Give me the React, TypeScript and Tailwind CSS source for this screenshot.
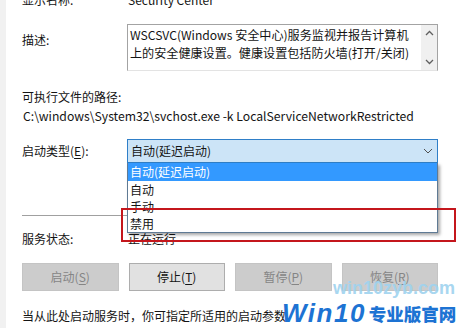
import React from "react";

const FONT = { fontFamily: '"Noto Sans CJK SC", "Liberation Sans", sans-serif' };

function U({ children }: { children: React.ReactNode }) {
  return <span className="underline underline-offset-2">{children}</span>;
}

export default function App() {
  return (
    <div
      className="relative w-[460px] h-[328px] overflow-hidden bg-white border-l-[6px] border-[#f1f1f1] text-[12px] text-[#141414]"
      style={FONT}
    >
      <div className="flex flex-col pl-[16px] w-[438px]">
        {/* display name */}
        <div className="flex h-[18px] -mt-[9px] leading-[18px]">
          <div className="w-[105px]">显示名称:</div>
          <div className="pl-[1px]">Security Center</div>
        </div>

        {/* description */}
        <div className="flex mt-[15px]">
          <div className="w-[105px] pt-[7px] leading-[18px]">描述:</div>
          <div className="flex w-[311px] h-[47px] border border-[#a3a3a3] border-b-[#e3e3e3]">
            <div className="flex-1 pl-[2px] pt-[1px] leading-[18px] text-[12.1px]">
              WSCSVC(Windows 安全中心)服务监视并报告计算机
              <br />
              上的安全健康设置。健康设置包括防火墙(打开/关闭)
            </div>
            <div className="flex w-[16px] flex-col items-center justify-between bg-[#f0f0f0] py-[5px] text-[#606060]">
              <svg width="9" height="6" viewBox="0 0 9 6">
                <path d="M1 5 L4.5 1.5 L8 5" fill="none" stroke="#606060" strokeWidth="1.3" />
              </svg>
              <svg width="9" height="6" viewBox="0 0 9 6">
                <path d="M1 1 L4.5 4.5 L8 1" fill="none" stroke="#606060" strokeWidth="1.3" />
              </svg>
            </div>
          </div>
        </div>

        {/* exe path */}
        <div className="mt-[17px] h-[18px] leading-[18px]">可执行文件的路径:</div>
        <div className="mt-[1px] h-[18px] leading-[18px] pl-[1px] text-[12.2px]">
          C:\windows\System32\svchost.exe -k LocalServiceNetworkRestricted
        </div>

        {/* startup type */}
        <div className="flex mt-[14px] h-[24px] items-center">
          <div className="w-[105px] leading-[18px]">
            启动类型(<U>E</U>):
          </div>
          <div className="flex w-[311px] h-[24px] items-center justify-between border border-[#2f7fc8] bg-[#cce4f7] pl-[3px] pr-[4px]">
            <span>自动(延迟启动)</span>
            <svg width="10" height="6" viewBox="0 0 10 6">
              <path d="M1 1 L5 5 L9 1" fill="none" stroke="#505050" strokeWidth="1" />
            </svg>
          </div>
        </div>

        {/* separator */}
        <div className="mt-[52px] h-[1px] bg-[#a0a0a0] w-[416px]" />

        {/* status */}
        <div className="flex mt-[14px] h-[18px] leading-[18px]">
          <div className="w-[105px]">服务状态:</div>
          <div className="pl-[1px]">正在运行</div>
        </div>

        {/* buttons */}
        <div className="mt-[15px] grid w-[416px] grid-cols-4 gap-x-[10px]">
          <div className="flex h-[28px] items-center justify-center border border-[#c4c4c4] bg-[#cccccc] text-[#858585]">
            启动(<U>S</U>)
          </div>
          <div className="flex h-[28px] items-center justify-center border border-[#adadad] bg-[#e1e1e1] text-[#141414]">
            停止(<U>T</U>)
          </div>
          <div className="flex h-[28px] items-center justify-center border border-[#c4c4c4] bg-[#cccccc] text-[#858585]">
            暂停(<U>P</U>)
          </div>
          <div className="flex h-[28px] items-center justify-center border border-[#c4c4c4] bg-[#cccccc] text-[#858585]">
            恢复(<U>R</U>)
          </div>
        </div>

        {/* bottom text */}
        <div className="mt-[16px] h-[18px] leading-[18px]">当从此处启动服务时，你可指定所适用的启动参数</div>
      </div>

      {/* dropdown list */}
      <div className="absolute left-[121px] top-[163px] flex w-[311px] flex-col border border-t-0 border-[#5f7a94] bg-white shadow-[2px_2px_3px_rgba(0,0,0,0.35)]">
        <div className="flex h-[18px] items-center bg-[#3399ff] pl-[2px] text-white">自动(延迟启动)</div>
        <div className="flex h-[17px] items-center pl-[2px]">自动</div>
        <div className="flex h-[17px] items-center pl-[2px]">手动</div>
        <div className="flex h-[17px] items-center pl-[2px]">禁用</div>
      </div>

      {/* red highlight box */}
      <div className="absolute left-[115px] top-[208px] h-[34px] w-[335px] border-2 border-[#c4161c]" />

      {/* watermark */}
      <div
        className="absolute left-[327px] top-[277px] text-[18px] font-bold leading-[22px] text-[#9fd3ef] opacity-90"
        style={{ fontFamily: '"Liberation Sans", sans-serif' }}
      >
        win10zyb.com
      </div>
      <div className="absolute left-[276px] top-[300px] flex items-end leading-[26px] text-[#1d73d3]">
        <span
          className="text-[26px] font-bold italic tracking-[1.5px]"
          style={{ fontFamily: '"Liberation Sans", sans-serif' }}
        >
          Win10
        </span>
        <span className="ml-[3px] text-[17.5px] font-black leading-[24px]" style={FONT}>
          专业版官网
        </span>
      </div>
    </div>
  );
}
